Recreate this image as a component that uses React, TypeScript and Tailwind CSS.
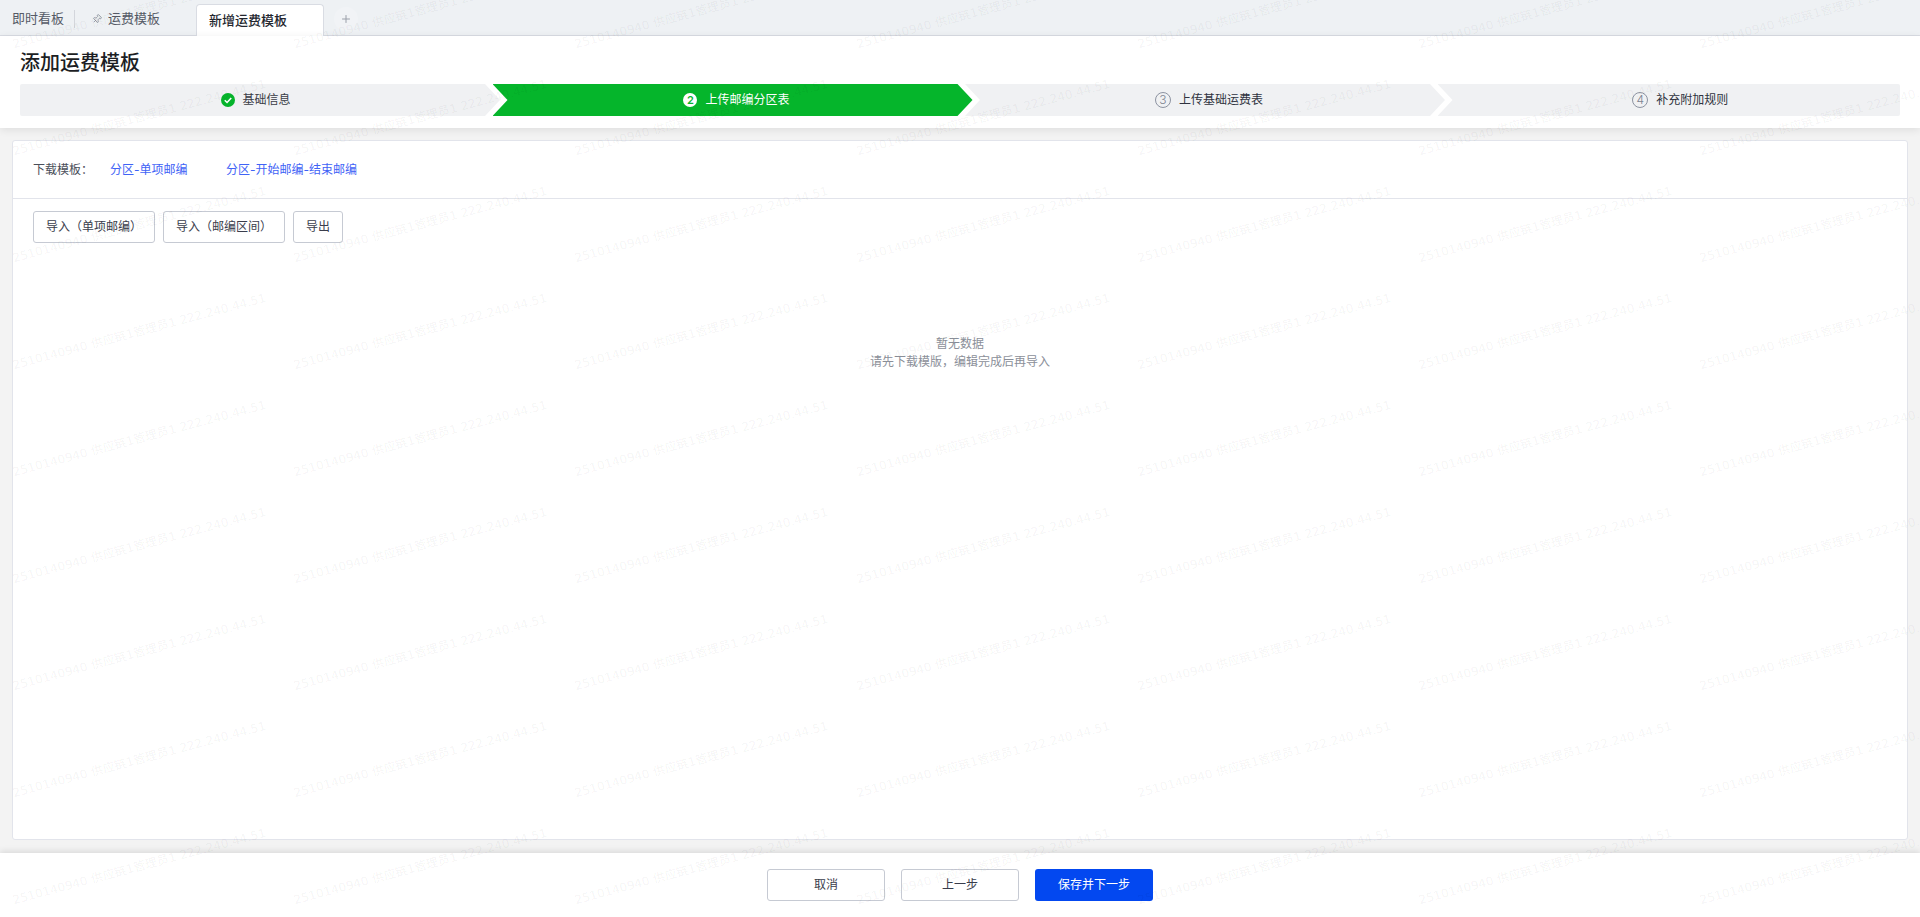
import { Pin, Plus } from "lucide-react";

const marks = Array.from({ length: 63 }, (_, i) => i);

function Watermark() {
  return (
    <div className="absolute inset-0 overflow-hidden pointer-events-none z-10">
      <div className="ml-[15px] -mt-[55px] grid grid-cols-[repeat(7,281.2px)] auto-rows-[107px]">
        {marks.map((i) => (
          <div key={i} className="flex items-end h-[107px]">
            <span className="block whitespace-nowrap font-['DejaVu_Sans','Noto_Sans_CJK_SC',sans-serif] text-[12px] tracking-[0.08px] leading-[16px] text-black/[0.055] origin-bottom-left -rotate-[15deg]">
              2510140940 供应链1管理员1 222.240.44.51
            </span>
          </div>
        ))}
      </div>
    </div>
  );
}

function Num({ n }: { n: string }) {
  return (
    <span className="w-4 h-4 rounded-full border border-[#8d93a1] flex items-center justify-center text-[12px] font-light leading-none text-[#7d8390] bg-transparent">
      {n}
    </span>
  );
}

export default function App() {
  return (
    <div className="relative h-screen overflow-hidden flex flex-col bg-[#f3f3f3] font-['Inter','Noto_Sans_CJK_SC',sans-serif] text-[12px] text-[#2f3340]">
      {/* tabs */}
      <div className="h-9 shrink-0 bg-[#eef1f4] border-b border-[#d9dce3] flex items-end text-[13px] text-[#555a66]">
        <div className="h-8 flex items-center pl-3 w-[76px] shrink-0">
          <span>即时看板</span>
          <span className="ml-[10px] w-px h-[18px] bg-[#d3d6dc]" />
        </div>
        <div className="h-8 flex items-center pl-4 w-[120px] shrink-0">
          <Pin className="w-[10px] h-[10px] rotate-45 text-[#777c88] mr-[6px]" strokeWidth={1.6} />
          <span>运费模板</span>
        </div>
        <div className="h-8 w-[128px] shrink-0 -mb-px bg-white border border-b-0 border-[#d9dce3] rounded-t-[4px] flex items-center pl-3 font-medium text-[#23262e]">
          新增运费模板
        </div>
        <div className="h-8 ml-[10px] flex items-center">
          <span className="w-6 h-6 rounded-full bg-[#f1f3f6] flex items-center justify-center -mt-[1px]">
            <Plus className="w-3 h-3 text-[#9a9fa9]" strokeWidth={2} />
          </span>
        </div>
      </div>

      {/* header */}
      <div className="shrink-0 h-[92px] bg-white px-5 pt-[13px] shadow-[0_2px_8px_rgba(0,0,0,0.09)] relative">
        <h1 className="text-[20px] leading-[28px] font-medium text-[#1c1e24] mb-[7px]">添加运费模板</h1>
        <div className="flex h-8">
          <div className="w-[480px] shrink-0 -mr-[7.5px] bg-[#f0f1f3] rounded-l-[2px] flex items-center justify-center pr-2 gap-[7px] [clip-path:polygon(0_0,465px_0,480px_50%,465px_100%,0_100%)]">
            <svg viewBox="0 0 16 16" className="w-[14px] h-[14px]">
              <circle cx="8" cy="8" r="8" fill="#05b32b" />
              <path d="M4.3 8.3l2.6 2.5 4.8-5" fill="none" stroke="#fff" strokeWidth="1.8" />
            </svg>
            <span className="text-[#3a3d46]">基础信息</span>
          </div>
          <div className="w-[480px] shrink-0 -mr-[7.5px] bg-[#05b52b] flex items-center justify-center pl-2 gap-[8px] text-white [clip-path:polygon(0_0,465px_0,480px_50%,465px_100%,0_100%,15px_50%)]">
            <span className="w-[14px] h-[14px] rounded-full bg-white text-[#05b52b] flex items-center justify-center text-[11px] font-semibold leading-none">2</span>
            <span>上传邮编分区表</span>
          </div>
          <div className="w-[480px] shrink-0 -mr-[7.5px] bg-[#f0f1f3] flex items-center justify-center pl-2 gap-[8px] [clip-path:polygon(0_0,465px_0,480px_50%,465px_100%,0_100%,15px_50%)]">
            <Num n="3" />
            <span>上传基础运费表</span>
          </div>
          <div className="flex-1 bg-[#f0f1f3] rounded-r-[2px] flex items-center justify-center pl-[23px] gap-[8px] [clip-path:polygon(0_0,100%_0,100%_100%,0_100%,15px_50%)]">
            <Num n="4" />
            <span>补充附加规则</span>
          </div>
        </div>
      </div>

      {/* card */}
      <div className="flex-1 min-h-0 ml-3 mr-[12px] mt-3 mb-[13px] bg-white border border-[#e2e4eb] rounded-[3px]">
        <div className="h-[58px] border-b border-[#e2e4eb] flex items-center pl-5">
          <span className="w-[77px] text-[#4a4e59]">{"下载模板\uFF1A"}</span>
          <a className="text-[#3f63f6] w-[116px]">分区-单项邮编</a>
          <a className="text-[#3f63f6]">分区-开始邮编-结束邮编</a>
        </div>
        <div className="pt-3 pl-5 flex gap-2">
          <button className="h-8 w-[122px] border border-[#c6cad3] rounded-[3px] text-[#3a3d4c] bg-white">{"导入\uFF08单项邮编\uFF09"}</button>
          <button className="h-8 w-[122px] border border-[#c6cad3] rounded-[3px] text-[#3a3d4c] bg-white">{"导入\uFF08邮编区间\uFF09"}</button>
          <button className="h-8 w-[50px] border border-[#c6cad3] rounded-[3px] text-[#3a3d4c] bg-white">导出</button>
        </div>
        <div className="mt-[92px] text-center leading-[18px] text-[#8b8f99]">
          <div>暂无数据</div>
          <div>{"请先下载模版\uFF0C编辑完成后再导入"}</div>
        </div>
      </div>

      {/* footer */}
      <div className="shrink-0 h-16 bg-white shadow-[0_-2px_6px_rgba(0,0,0,0.1)] relative flex items-center justify-center gap-4">
        <button className="h-8 w-[118px] border border-[#c6cad3] rounded-[3px] text-[#3a3d4c] bg-white">取消</button>
        <button className="h-8 w-[118px] border border-[#c6cad3] rounded-[3px] text-[#3a3d4c] bg-white">上一步</button>
        <button className="h-8 w-[118px] rounded-[3px] text-white bg-[#0348f0]">保存并下一步</button>
      </div>

      <Watermark />
    </div>
  );
}
